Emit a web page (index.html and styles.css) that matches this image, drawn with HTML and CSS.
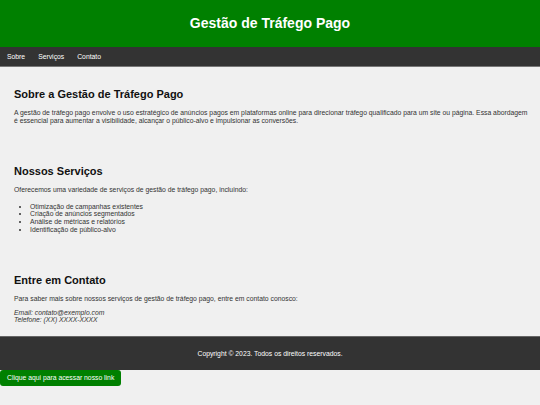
FILE: index.html
```html
<!DOCTYPE html>
<html lang="pt-BR">
<head>
  <meta charset="UTF-8">
  <title>Gestão de Tráfego Pago</title>
  <meta name="viewport" content="width=device-width, initial-scale=1.0">
  <link rel="stylesheet" href="styles.css">
</head>
<body>
  <header class="topo">
    <h1>Gestão de Tráfego Pago</h1>
  </header>
  <nav class="menu">
    <a href="#sobre">Sobre</a>
    <a href="#servicos">Serviços</a>
    <a href="#contato">Contato</a>
  </nav>
  <main class="conteudo">
    <section class="bloco" id="sobre">
      <h2>Sobre a Gestão de Tráfego Pago</h2>
      <p>A gestão de tráfego pago envolve o uso estratégico de anúncios pagos em plataformas online para direcionar tráfego qualificado para um site ou página. Essa abordagem é essencial para aumentar a visibilidade, alcançar o público-alvo e impulsionar as conversões.</p>
    </section>
    <section class="bloco" id="servicos">
      <h2>Nossos Serviços</h2>
      <p>Oferecemos uma variedade de serviços de gestão de tráfego pago, incluindo:</p>
      <ul>
        <li>Otimização de campanhas existentes</li>
        <li>Criação de anúncios segmentados</li>
        <li>Análise de métricas e relatórios</li>
        <li>Identificação de público-alvo</li>
      </ul>
    </section>
    <section class="bloco" id="contato">
      <h2>Entre em Contato</h2>
      <p>Para saber mais sobre nossos serviços de gestão de tráfego pago, entre em contato conosco:</p>
      <address>Email: contato@exemplo.com<br>Telefone: (XX) XXXX-XXXX</address>
    </section>
  </main>
  <footer class="rodape">
    <p>Copyright © 2023. Todos os direitos reservados.</p>
  </footer>
  <a class="btn-link" href="#">Clique aqui para acessar nosso link</a>
</body>
</html>
```

FILE: styles.css
```css
* { box-sizing: border-box; }
body {
  margin: 0;
  font-family: "Liberation Sans", Arial, sans-serif;
  font-size: 6.8px;
  line-height: 7.6px;
  background: #f0f0f0;
  color: #333;
}
.topo {
  background: #008000;
  color: #fff;
  height: 47px;
  display: flex; align-items: center; justify-content: center;
}
.topo h1 { margin: 0; font-size: 14px; line-height: 1.2; }
.menu {
  background: #333;
  height: 20px;
  border-bottom: 1px solid #777;
  display: flex; align-items: center; gap: 13px;
  padding: 0 7px;
}
.menu a { color: #fff; text-decoration: none; }
.conteudo { padding: 21px 10px 0 14px; }
.bloco { margin-bottom: 41px; }
.bloco:last-child { margin-bottom: 12px; }
.bloco h2 { margin: 0 0 8px; font-size: 11px; line-height: 13px; color: #111; }
.bloco p { margin: 0 0 9px; }
.bloco ul { margin: 0; padding-left: 16px; }
.bloco address { margin-top: -3px; }
.rodape {
  background: #333;
  color: #fff;
  height: 34px;
  border-top: 1px solid #666;
  display: flex; align-items: center; justify-content: center;
}
.rodape p { margin: 0; }
.btn-link {
  display: inline-block;
  background: #008000;
  color: #fff;
  text-decoration: none;
  padding: 4px 7px;
  border-radius: 3px;
}
```
